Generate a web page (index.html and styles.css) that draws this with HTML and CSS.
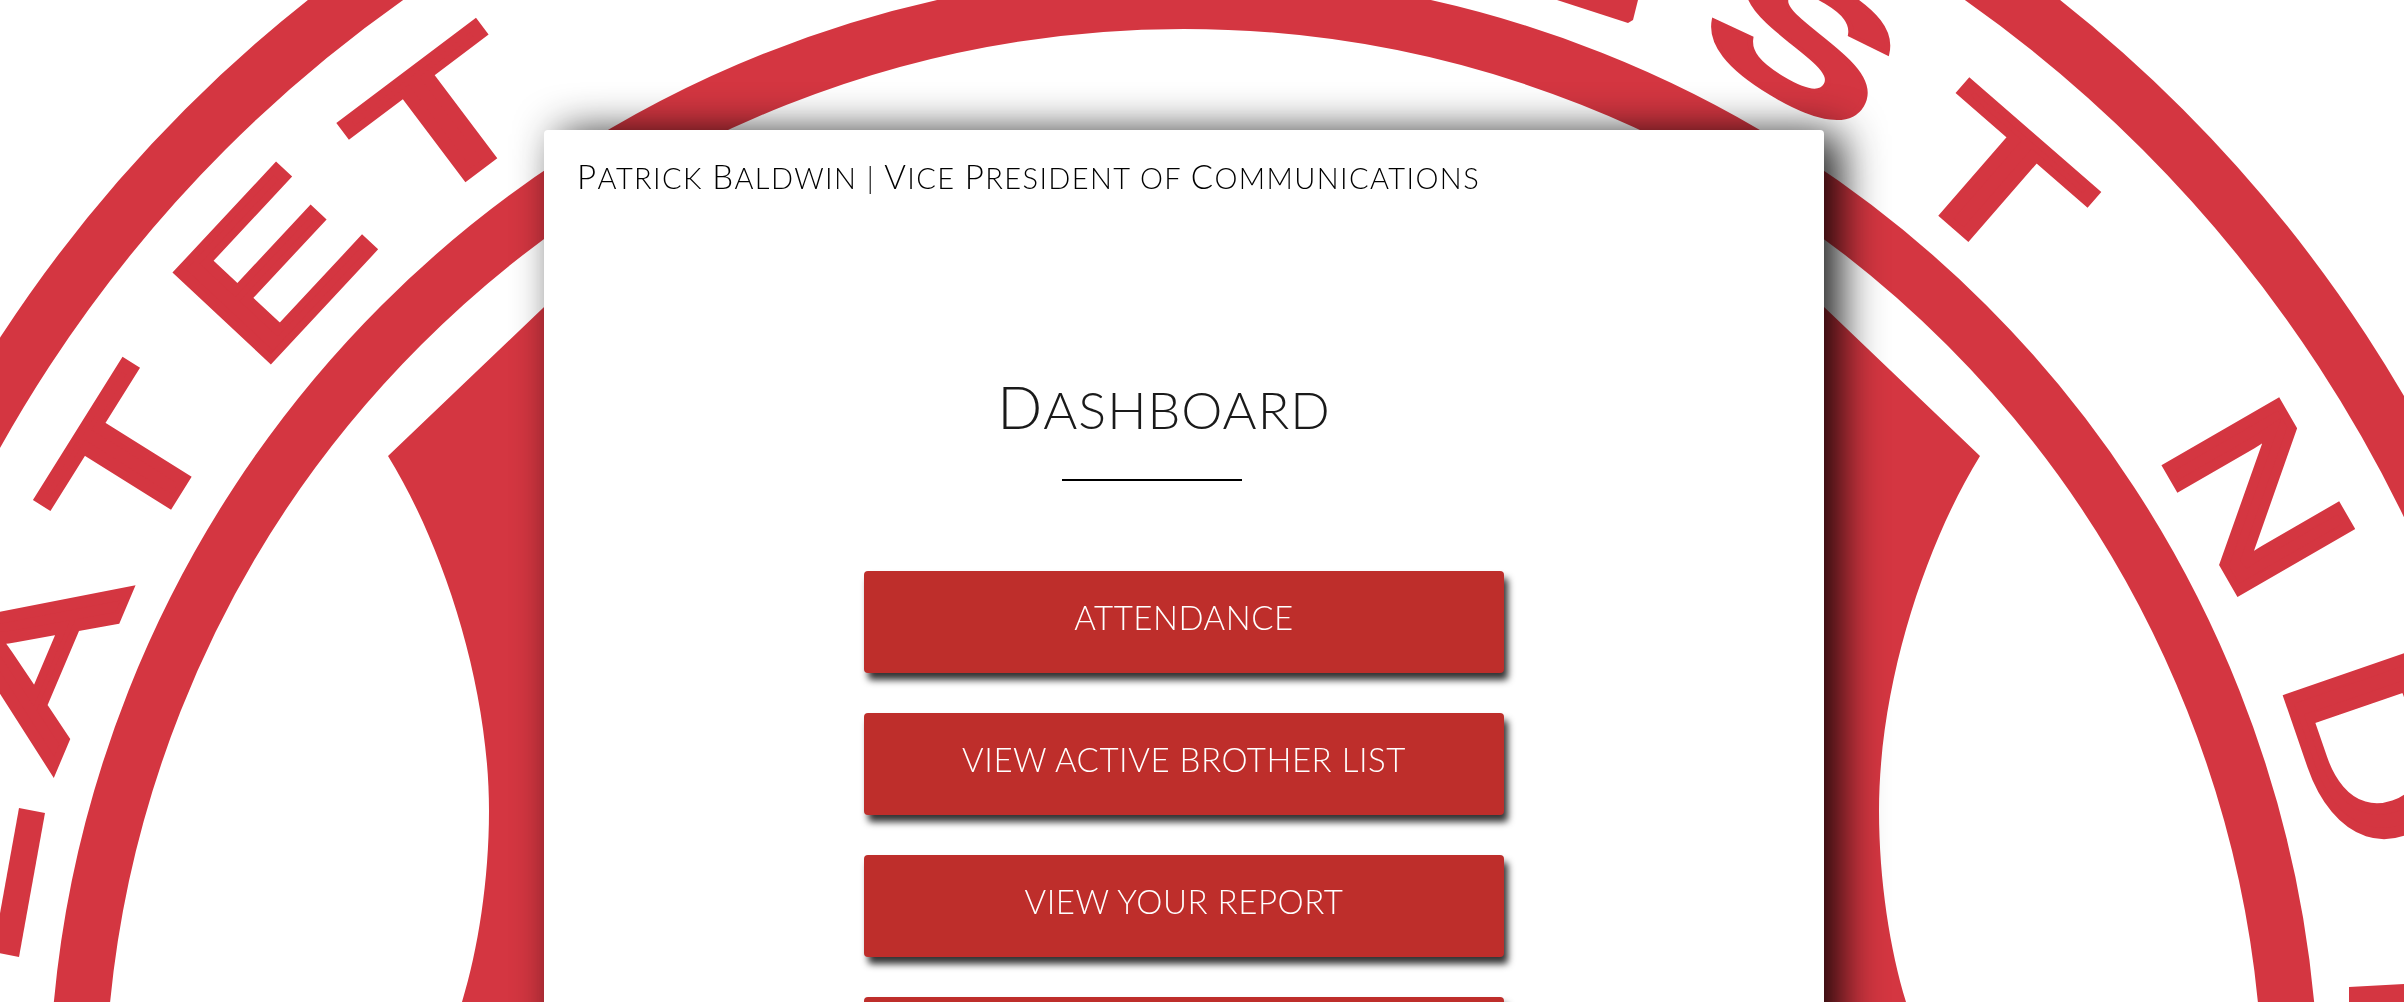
FILE: index.html
```html
<!DOCTYPE html>
<html>

<head>
    <meta charset="utf-8">
    <title>Dashboard</title>
    <meta name="viewport" content="width=device-width, initial-scale=1">
    <link rel="stylesheet" href="styles.css">
</head>

<body>
    <!-- the seal behind the card -->
    <svg class="seal" viewBox="0 0 2404 1002" width="2404" height="1002" aria-hidden="true">
        <g class="seal-rings">
            <circle cx="1184" cy="1108" r="1384" stroke-width="57"></circle>
            <circle cx="1184" cy="1108" r="1107" stroke-width="56"></circle>
        </g>
        <path class="seal-fill" d="M388 456 L700 158 L1668 158 L1980 456 C1928 540 1879 680 1879 811 C1879 880 1890 950 1906 1002 L1906 1100 L462 1100 L462 1002 C478 950 489 880 489 811 C489 680 440 540 388 456 Z"></path>
        <polygon class="seal-fill" points="19,808 45,813 19,957 -7,952"></polygon>
        <polygon class="seal-fill" points="1557,0 1628,23 1633,20 1638,0"></polygon>
        <polygon class="seal-fill" points="2349,987 2404,984 2404,1002 2349,1002"></polygon>
        <text class="seal-letter" font-size="170" transform="translate(91 680) rotate(-67) scale(1.68 1)">A</text>
        <text class="seal-letter" font-size="166" transform="translate(178 491) rotate(-58) scale(1.66 1)">T</text>
        <text class="seal-letter" font-size="184" transform="translate(318 308) rotate(-47) scale(1.46 1)">E</text>
        <text class="seal-letter" font-size="170" transform="translate(479 167) rotate(-37) scale(1.68 1)">T</text>
        <text class="seal-letter seal-bold" font-size="176" transform="translate(1772 92) rotate(31) scale(1.6 1)">S</text>
        <text class="seal-letter" font-size="170" transform="translate(1956 226) rotate(41) scale(1.68 1)">T</text>
        <text class="seal-letter" font-size="186" transform="translate(2203 529) rotate(60) scale(1.36 1)">N</text>
        <text class="seal-letter" font-size="186" transform="translate(2313 771) rotate(71) scale(1.46 1)">D</text>
    </svg>

    <main class="card">
        <p class="who"><span class="cap">P</span>atrick <span class="cap">B</span>aldwin | <span class="cap">V</span>ice <span class="cap">P</span>resident of <span class="cap">C</span>ommunications</p>

        <h1 class="title"><span class="cap">D</span>ashboard</h1>
        <hr class="rule">

        <div class="actions">
            <button class="dash-btn">Attendance</button>
            <button class="dash-btn">View Active Brother List</button>
            <button class="dash-btn">View Your Report</button>
            <button class="dash-btn"></button>
        </div>
    </main>
</body>

</html>
```

FILE: styles.css
```css
html, body {
    height: 100%;
    overflow: hidden;
}

body {
    margin: 0;
    background: #fff;
    padding: 130px 0 0 544px;
    box-sizing: border-box;
    font-family: "Lato", "Liberation Sans", sans-serif;
}

.seal {
    position: fixed;
    top: 0;
    left: 0;
    z-index: -1;
}

.seal-rings circle {
    fill: none;
    stroke: #d43641;
}

.seal-fill {
    fill: #d43641;
}

.seal-letter {
    font-family: "Liberation Sans", sans-serif;
    fill: #d43641;
    stroke: #d43641;
    stroke-width: 8px;
    text-anchor: middle;
}

.seal-bold {
    font-weight: 700;
    stroke-width: 4px;
}

.card {
    width: 1280px;
    height: 1200px;
    background: #fff;
    border-radius: 4px;
    box-shadow: 16px 4px 44px rgba(0, 0, 0, 0.9);
}

.who {
    margin: 0;
    padding: 26px 0 0 33px;
    font-size: 29px;
    font-weight: 300;
    line-height: 40px;
    letter-spacing: 1.4px;
    color: #000;
    text-transform: uppercase;
}

.cap {
    font-size: 1.14em;
}

.title {
    margin: 0;
    padding: 173px 40px 0 0;
    text-align: center;
    font-size: 52px;
    font-weight: 300;
    line-height: 70px;
    letter-spacing: 1px;
    color: #1a1a1a;
    text-transform: uppercase;
}

.rule {
    width: 180px;
    height: 2px;
    margin: 35px 0 0 518px;
    border: 0;
    background: #000;
}

.actions {
    display: flex;
    flex-direction: column;
    align-items: center;
    gap: 40px;
    margin-top: 90px;
}

.dash-btn {
    width: 640px;
    height: 102px;
    padding: 0 0 11px;
    border: 0;
    border-radius: 4px;
    background: #be2e2b;
    box-shadow: 4px 7px 7px rgba(0, 0, 0, 0.8);
    color: #fff;
    font-family: inherit;
    font-size: 33px;
    font-weight: 300;
    letter-spacing: 0.55px;
    text-transform: uppercase;
}
```
